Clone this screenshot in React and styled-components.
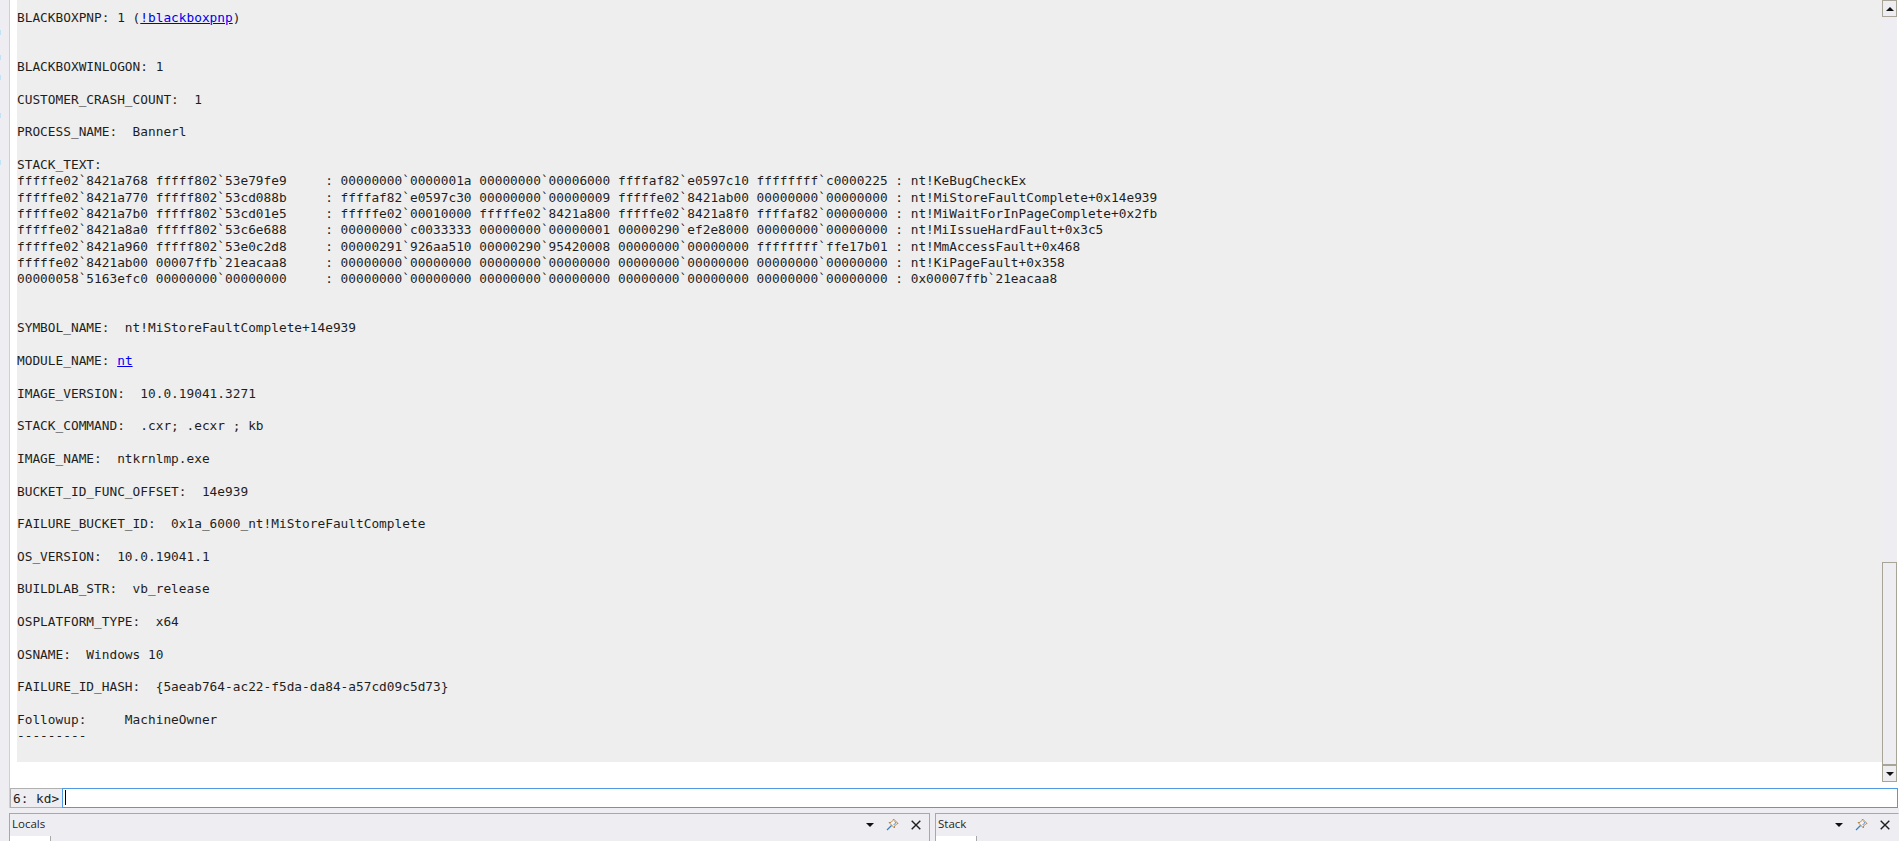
import React from "react";
import styled, { createGlobalStyle } from "styled-components";

const GlobalStyle = createGlobalStyle`
  html, body {
    margin: 0;
    padding: 0;
    height: 100%;
    overflow: hidden;
    background: #eeeef2;
  }
`;

const Page = styled.div`
  width: 1899px;
  height: 841px;
  display: flex;
  overflow: hidden;
  font-family: "DejaVu Sans Mono", monospace;
`;

const LeftStrip = styled.div`
  width: 9px;
  flex-shrink: 0;
  background: #eeeef2;
`;

const Main = styled.div`
  flex: 1;
  min-width: 0;
  display: flex;
  flex-direction: column;
`;

const CommandWindow = styled.div`
  height: 808px;
  display: flex;
  flex-direction: column;
  background: #fff;
  border-left: 1px solid #cccedb;
`;

const OutputRow = styled.div`
  height: 782px;
  display: flex;
  flex-shrink: 0;
`;

const OutputArea = styled.div`
  flex: 1;
  padding: 0 0 20px 7px;
  min-width: 0;
`;

const Output = styled.div`
  height: 100%;
  box-sizing: border-box;
  background: #eeeeee;
  padding-top: 10px;
  overflow: hidden;
  font-size: 12.8px;
  color: #1e1e1e;
`;

const Line = styled.div`
  height: 16.34px;
  line-height: 16.34px;
  white-space: pre;
`;

const Link = styled.span`
  color: #0000ee;
  text-decoration: underline;
`;

const Scrollbar = styled.div`
  width: 15px;
  margin-right: 2px;
  background: #eeeef2;
  display: flex;
  flex-direction: column;
`;

const ScrollButton = styled.div`
  height: 17px;
  flex-shrink: 0;
  box-sizing: border-box;
  border: 1px solid #a8a498;
  background: #eeeef2;
  display: flex;
  align-items: center;
  justify-content: center;
`;

const ScrollTrack = styled.div`
  flex: 1;
  display: flex;
  flex-direction: column;
  justify-content: flex-end;
`;

const ScrollThumb = styled.div`
  height: 203px;
  box-sizing: border-box;
  border: 1px solid #a8a498;
  background: #eeeef2;
`;

const Triangle = styled.span`
  width: 0;
  height: 0;
  border-left: 4px solid transparent;
  border-right: 4px solid transparent;
  ${(p) =>
    p.$up ? "border-bottom: 4px solid #111;" : "border-top: 4px solid #111;"}
`;

const CommandBar = styled.div`
  display: flex;
  height: 20px;
  margin-top: 6px;
  margin-right: 1px;
  flex-shrink: 0;
`;

const Prompt = styled.div`
  width: 52px;
  box-sizing: border-box;
  border: 1px solid #b0b0b0;
  border-right: none;
  background: #eeeef2;
  padding-left: 2px;
  font-size: 12.8px;
  line-height: 19px;
  color: #1e1e1e;
`;

const CommandInput = styled.div`
  flex: 1;
  box-sizing: border-box;
  border: 1px solid #4f9ae2;
  background: #fff;
  padding: 1px 0 0 2px;
`;

const Caret = styled.div`
  width: 1px;
  height: 15px;
  background: #000;
`;

const PanelRow = styled.div`
  display: flex;
  gap: 5px;
  margin-top: 5px;
  flex: 1;
`;

const Panel = styled.div`
  ${(p) => (p.$width ? `width: ${p.$width}px;` : "flex: 1;")}
  box-sizing: border-box;
  display: flex;
  flex-direction: column;
  border-top: 1px solid #a8a8a8;
  border-left: 1px solid #a8a8a8;
  border-right: 1px solid ${(p) => (p.$width ? "#a8a8a8" : "transparent")};
  background: #eeeef2;
`;

const PanelHeader = styled.div`
  display: flex;
  align-items: center;
  height: 21px;
  flex-shrink: 0;
  padding: 0 8px 0 2px;
  font-family: "Open Sans", sans-serif;
  font-size: 11.5px;
  color: #1e1e1e;
`;

const PanelTitle = styled.div`
  flex: 1;
  padding-bottom: 2px;
`;

const PanelTools = styled.div`
  display: flex;
  align-items: center;
  gap: 12px;
`;

const PanelTab = styled.div`
  width: 40px;
  flex: 1;
  margin-top: 1px;
  background: #fff;
  border-right: 1px solid #a8a8a8;
`;

const PinIcon = () => (
  <svg width="13" height="13" viewBox="0 0 13 13" fill="none">
    <path d="M7.5 1 L12 5.5 L10.8 5.8 L8.6 8 L8.5 10 L3 4.5 L5 4.4 L7.2 2.2 Z" fill="#f4f4f6" stroke="#b5894a" strokeWidth="1" />
    <path d="M8.5 3.5 L9.8 4.8 L7.6 7" stroke="#4a90d9" strokeWidth="1" />
    <path d="M5.5 7.5 L1 12" stroke="#3a7fc4" strokeWidth="1.2" />
  </svg>
);

const CloseIcon = () => (
  <svg width="10" height="10" viewBox="0 0 10 10" fill="none">
    <path d="M0.7 0.7 L9.3 9.3 M9.3 0.7 L0.7 9.3" stroke="#1e1e1e" strokeWidth="1.4" />
  </svg>
);

const lines = [
  <>BLACKBOXPNP: 1 (<Link>!blackboxpnp</Link>)</>,
  "",
  "",
  "BLACKBOXWINLOGON: 1",
  "",
  "CUSTOMER_CRASH_COUNT:  1",
  "",
  "PROCESS_NAME:  Bannerl",
  "",
  "STACK_TEXT:",
  "fffffe02`8421a768 fffff802`53e79fe9     : 00000000`0000001a 00000000`00006000 ffffaf82`e0597c10 ffffffff`c0000225 : nt!KeBugCheckEx",
  "fffffe02`8421a770 fffff802`53cd088b     : ffffaf82`e0597c30 00000000`00000009 fffffe02`8421ab00 00000000`00000000 : nt!MiStoreFaultComplete+0x14e939",
  "fffffe02`8421a7b0 fffff802`53cd01e5     : fffffe02`00010000 fffffe02`8421a800 fffffe02`8421a8f0 ffffaf82`00000000 : nt!MiWaitForInPageComplete+0x2fb",
  "fffffe02`8421a8a0 fffff802`53c6e688     : 00000000`c0033333 00000000`00000001 00000290`ef2e8000 00000000`00000000 : nt!MiIssueHardFault+0x3c5",
  "fffffe02`8421a960 fffff802`53e0c2d8     : 00000291`926aa510 00000290`95420008 00000000`00000000 ffffffff`ffe17b01 : nt!MmAccessFault+0x468",
  "fffffe02`8421ab00 00007ffb`21eacaa8     : 00000000`00000000 00000000`00000000 00000000`00000000 00000000`00000000 : nt!KiPageFault+0x358",
  "00000058`5163efc0 00000000`00000000     : 00000000`00000000 00000000`00000000 00000000`00000000 00000000`00000000 : 0x00007ffb`21eacaa8",
  "",
  "",
  "SYMBOL_NAME:  nt!MiStoreFaultComplete+14e939",
  "",
  <>MODULE_NAME: <Link>nt</Link></>,
  "",
  "IMAGE_VERSION:  10.0.19041.3271",
  "",
  "STACK_COMMAND:  .cxr; .ecxr ; kb",
  "",
  "IMAGE_NAME:  ntkrnlmp.exe",
  "",
  "BUCKET_ID_FUNC_OFFSET:  14e939",
  "",
  "FAILURE_BUCKET_ID:  0x1a_6000_nt!MiStoreFaultComplete",
  "",
  "OS_VERSION:  10.0.19041.1",
  "",
  "BUILDLAB_STR:  vb_release",
  "",
  "OSPLATFORM_TYPE:  x64",
  "",
  "OSNAME:  Windows 10",
  "",
  "FAILURE_ID_HASH:  {5aeab764-ac22-f5da-da84-a57cd09c5d73}",
  "",
  "Followup:     MachineOwner",
  "---------",
];

function DockPanel({ title, width }) {
  return (
    <Panel $width={width}>
      <PanelHeader>
        <PanelTitle>{title}</PanelTitle>
        <PanelTools>
          <Triangle />
          <PinIcon />
          <CloseIcon />
        </PanelTools>
      </PanelHeader>
      <PanelTab />
    </Panel>
  );
}

export default function App() {
  return (
    <Page>
      <GlobalStyle />
      <LeftStrip>
        <svg width="9" height="200" viewBox="0 0 9 200">
          {[30, 55, 75, 113, 160].map((y) => (
            <rect key={y} x="0" y={y} width="1" height="5" fill="#bfe3f5" />
          ))}
        </svg>
      </LeftStrip>
      <Main>
        <CommandWindow>
          <OutputRow>
            <OutputArea>
              <Output>
                {lines.map((line, i) => (
                  <Line key={i}>{line}</Line>
                ))}
              </Output>
            </OutputArea>
            <Scrollbar>
              <ScrollButton>
                <Triangle $up />
              </ScrollButton>
              <ScrollTrack>
                <ScrollThumb />
              </ScrollTrack>
              <ScrollButton>
                <Triangle />
              </ScrollButton>
            </Scrollbar>
          </OutputRow>
          <CommandBar>
            <Prompt>6: kd&gt;</Prompt>
            <CommandInput>
              <Caret />
            </CommandInput>
          </CommandBar>
        </CommandWindow>
        <PanelRow>
          <DockPanel title="Locals" width={921} />
          <DockPanel title="Stack" />
        </PanelRow>
      </Main>
    </Page>
  );
}
